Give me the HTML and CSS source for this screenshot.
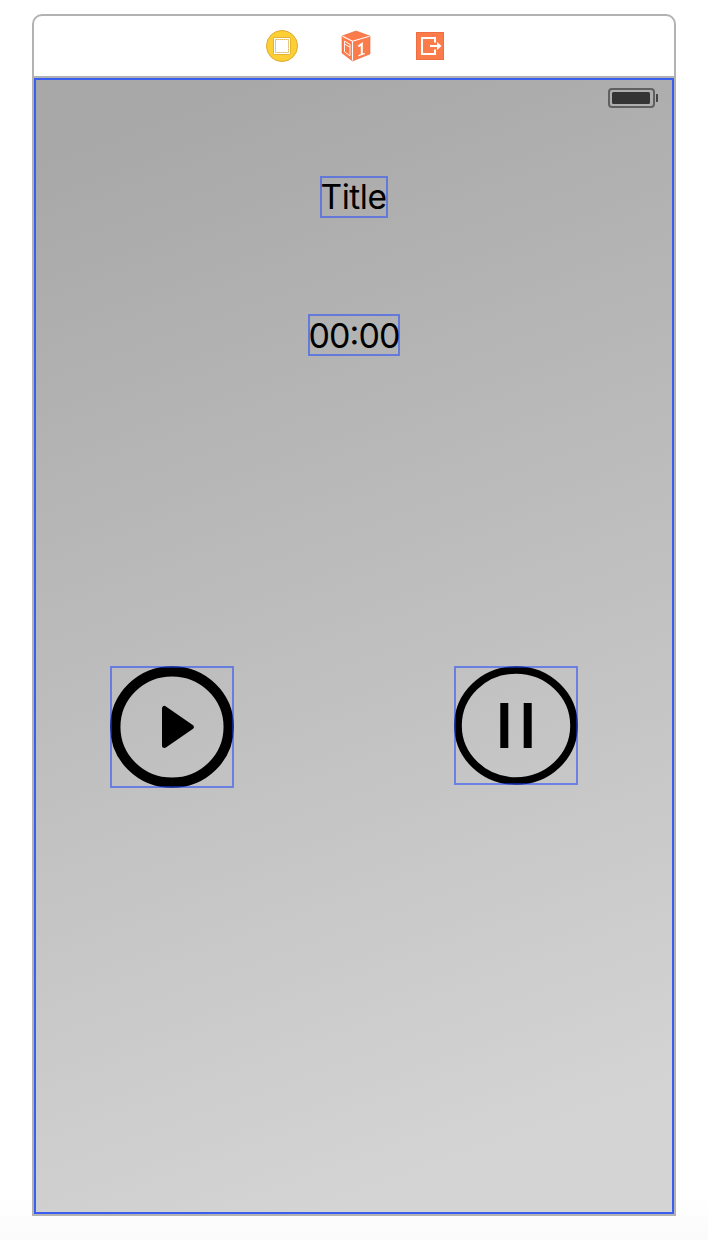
FILE: index.html
```html
<!DOCTYPE html>
<html lang="en">
<head>
<meta charset="utf-8">
<title>Storyboard scene</title>
<link rel="stylesheet" href="styles.css">
</head>
<body>
<main class="scene">
  <header class="dock">
    <svg class="dock-icon" width="32" height="32" viewBox="0 0 32 32">
      <circle cx="16" cy="16" r="15.5" fill="#fccf34" stroke="#dfaa32"/>
      <rect x="7.500" y="7.500" width="17" height="17" rx="1" fill="none" stroke="#e4b43a"/>
      <rect x="8" y="8" width="16" height="16" fill="#fff"/>
      <rect x="9.500" y="9.500" width="13" height="13" fill="none" stroke="#dba72e" stroke-dasharray="1.250 .75"/>
    </svg>
    <svg class="dock-icon" width="30" height="32" viewBox="0 0 30 32">
      <path d="M15 1 29 6v18L11.500 31 1 23V6Z" fill="#fc7b4b" stroke="#e8683b" stroke-width=".6"/>
      <path d="M1.500 6.300 11.500 11.200 28.500 6.300M11.500 11.200V30.500" fill="none" stroke="#fff" stroke-width="1.100"/>
      <path d="M3.500 11.200 9 14.400V25.800L3.500 21.800ZM3.500 14 9 17.200" fill="none" stroke="#fff" stroke-width=".9"/>
      <path d="M17.300 16.500 20.800 14V25" fill="none" stroke="#fff" stroke-width="2"/>
      <path d="M17.500 25.700 23.800 23.500" stroke="#fff" stroke-width="1.300"/>
    </svg>
    <svg class="dock-icon" width="28" height="28" viewBox="0 0 28 28">
      <rect x=".5" y=".5" width="27" height="27" fill="#fc7b4b" stroke="#ed6e42"/>
      <path d="M19 10.500V6H6V22H19V17.500" fill="none" stroke="#fff" stroke-width="2"/>
      <path d="M14 14H24" stroke="#fff" stroke-width="2"/>
      <path d="M21 10 25.500 14 21 18Z" fill="#fff"/>
    </svg>
  </header>
  <section class="screen">
    <div class="status">
      <svg width="50" height="20" viewBox="0 0 50 20">
        <rect x="1" y="1" width="45" height="18" rx="3" fill="none" stroke="#606060" stroke-width="2"/>
        <rect x="4" y="4" width="38" height="12" rx="1.500" fill="#343434"/>
        <path d="M48 6h1.200q.8 0 .8 1v6q0 1-.8 1H48Z" fill="#444"/>
      </svg>
    </div>
    <div class="label title"><span>Title</span></div>
    <div class="label time"><span>00:00</span></div>
    <div class="controls">
      <div class="control play">
        <svg width="124" height="122" viewBox="0 0 124 122">
          <ellipse cx="62" cy="61" rx="56.700" ry="55.700" fill="none" stroke="#000" stroke-width="10.300"/>
          <path d="M54.500 42.500V79.500L81.300 61Z" stroke="#000" stroke-width="5" stroke-linejoin="round"/>
        </svg>
      </div>
      <div class="control pause">
        <svg width="124" height="119" viewBox="0 0 124 119">
          <ellipse cx="62" cy="59.500" rx="58" ry="55.500" fill="none" stroke="#000" stroke-width="7.600"/>
          <path d="M46.300 37h8v45h-8ZM69.700 37h8v45h-8Z"/>
        </svg>
      </div>
    </div>
  </section>
</main>
</body>
</html>
```
FILE: styles.css
```css
* { box-sizing: border-box; }
body {
  margin: 0;
  height: 1240px;
  padding: 14px 32px 24px;
  background: linear-gradient(#fff 0, #fff 1200px, #fafafa 1240px);
  font-family: Inter, "Liberation Sans", sans-serif;
}
svg { display: block; }
.scene {
  width: 644px;
  height: 1202px;
  border: 2px solid #b2b2b2;
  border-radius: 10px 10px 0 0;
  background: #fff;
}
.dock {
  height: 62px;
  display: flex;
  align-items: center;
  justify-content: center;
  gap: 45px;
  padding-left: 2px;
  border-bottom: 2px solid #b2b2b2;
}
.dock-icon:first-child { margin-right: -2px; }
.screen {
  height: 1136px;
  border: 2px solid #3a5ff0;
  background: linear-gradient(160deg, #a8a8a8 6%, #d4d4d4 91%);
  display: flex;
  flex-direction: column;
  align-items: center;
}
.status {
  align-self: stretch;
  display: flex;
  justify-content: flex-end;
  height: 96px;
  padding: 8px 14px 0 0;
}
.label {
  display: flex;
  align-items: center;
  justify-content: center;
  height: 42px;
  padding-top: 1px;
  border: 2px solid rgba(66, 98, 235, .7);
  color: #000;
  font-size: 34px;
  line-height: 37px;
  white-space: nowrap;
}
.title {
  width: 68px;
  padding-right: 1px;
  font-size: 33.500px;
  letter-spacing: -.5px;
}
.time {
  width: 92px;
  margin-top: 96px;
  letter-spacing: -.9px;
  font-feature-settings: "case";
}
.controls {
  display: flex;
  align-items: flex-start;
  gap: 220px;
  margin-top: 310px;
  margin-right: 20px;
}
.control { position: relative; }
.control::after {
  content: "";
  position: absolute;
  inset: 0;
  border: 2px solid rgba(24, 66, 255, .52);
}
```
